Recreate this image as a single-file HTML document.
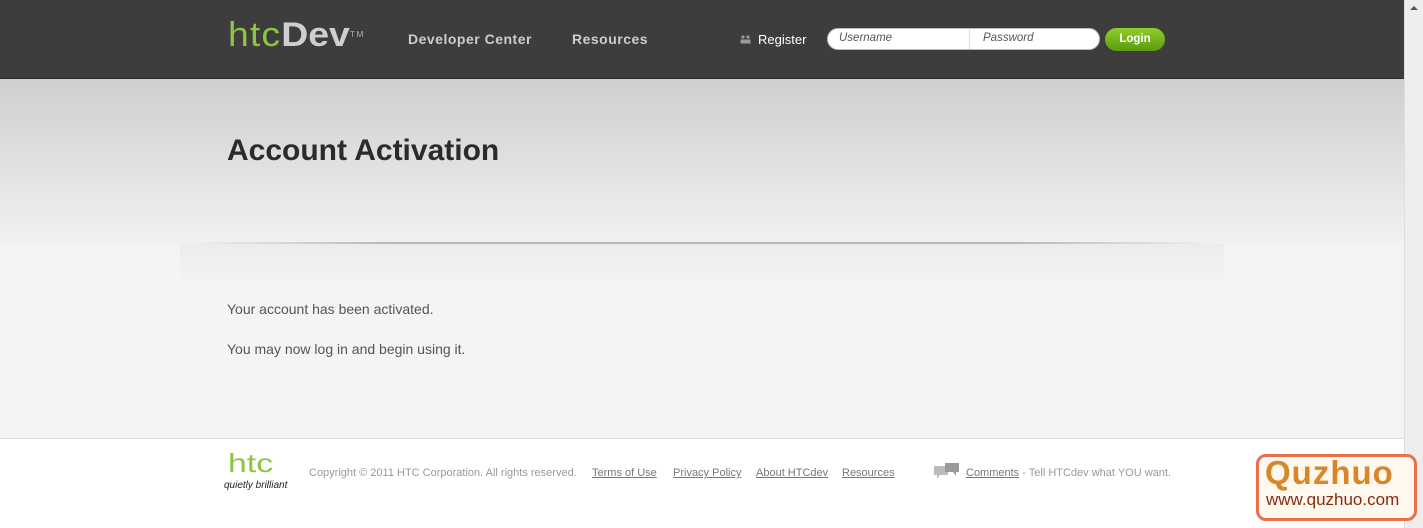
<!DOCTYPE html>
<html><head><style>
*{margin:0;padding:0;box-sizing:border-box}
body{width:1423px;height:528px;overflow:hidden;font-family:"Liberation Sans",Arial,sans-serif;background:#f4f4f4;position:relative}
.main{position:absolute;left:0;top:0;width:1404px;height:528px}
.hdr{position:absolute;left:0;top:0;width:1404px;height:79px;background:#3d3d3d;border-bottom:1px solid #2a2a2a}
.band{position:absolute;left:0;top:79px;width:1404px;height:164px;background:linear-gradient(#cfcfcf,#f1f1f1)}
.line{position:absolute;left:180px;top:242px;width:1044px;height:2px;background:linear-gradient(90deg,rgba(180,180,180,0),#b8b8b8 20%,#b8b8b8 80%,rgba(180,180,180,0))}
.shadow{position:absolute;left:180px;top:244px;width:1044px;height:40px;background:linear-gradient(#ececec,#f4f4f4)}
.foot{position:absolute;left:0;top:438px;width:1404px;height:90px;background:#fff;border-top:1px solid #ddd}
.sb{position:absolute;left:1404px;top:0;width:19px;height:528px;background:#eeeeee;border-left:1px solid #ddd}
.t{position:absolute;white-space:nowrap}
a{color:#777;text-decoration:underline}
</style></head><body>
<div class="main">
<div class="hdr"></div>
<div class="band"></div>
<div class="line"></div>
<div class="shadow"></div>
<div class="t" style="left:228px;top:16px;font-size:34px;letter-spacing:1px;color:#8cc63f;line-height:38px;transform:scaleX(1.1);transform-origin:left">htc<span style="color:#cfcfcf;font-weight:bold;letter-spacing:0">Dev</span><span style="font-size:8px;color:#aaa;vertical-align:top;">TM</span></div>
<div class="t" style="left:408px;top:31px;font-size:14px;font-weight:bold;color:#cdcdcd;letter-spacing:.5px">Developer Center</div>
<div class="t" style="left:572px;top:31px;font-size:14px;font-weight:bold;color:#cdcdcd;letter-spacing:.5px">Resources</div>
<svg class="t" style="left:740px;top:35px" width="12" height="10"><circle cx="3" cy="2" r="1.6" fill="#999"/><circle cx="8" cy="2" r="1.6" fill="#999"/><rect x="0.5" y="4.5" width="5" height="4" fill="#999"/><rect x="5.5" y="4.5" width="5" height="4" fill="#999"/></svg>
<div class="t" style="left:758px;top:32px;font-size:13px;color:#fff">Register</div>
<div style="position:absolute;left:827px;top:28px;width:273px;height:22px;background:#fff;border-radius:11px;border:1px solid #bbb"></div>
<div style="position:absolute;left:969px;top:29px;width:1px;height:20px;background:#ddd"></div>
<div class="t" style="left:839px;top:32px;font-size:11.5px;font-style:italic;color:#555">Username</div>
<div class="t" style="left:983px;top:32px;font-size:11.5px;font-style:italic;color:#555">Password</div>
<div style="position:absolute;left:1105px;top:28px;width:60px;height:23px;border-radius:12px;background:linear-gradient(#8fcf2a,#5a9a10);color:#fff;font-size:11.5px;font-weight:bold;text-align:center;line-height:23px">Login</div>
<div class="t" style="left:227px;top:134px;font-size:30px;font-weight:bold;color:#2b2b2b">Account Activation</div>
<div class="t" style="left:227px;top:301px;font-size:14px;color:#555">Your account has been activated.</div>
<div class="t" style="left:227px;top:341px;font-size:14px;color:#555">You may now log in and begin using it.</div>
<div class="foot"></div>
<div class="t" style="left:228px;top:450px;font-size:26px;color:#8cc63f;line-height:26px;transform:scaleX(1.3);transform-origin:left">htc</div>
<div class="t" style="left:224px;top:480px;font-size:10px;font-style:italic;color:#222">quietly brilliant</div>
<div class="t" style="left:309px;top:467px;font-size:11px;color:#999">Copyright © 2011 HTC Corporation. All rights reserved.</div>
<div class="t" style="left:592px;top:467px;font-size:11px"><a>Terms of Use</a></div>
<div class="t" style="left:673px;top:467px;font-size:11px"><a>Privacy Policy</a></div>
<div class="t" style="left:756px;top:467px;font-size:11px"><a>About HTCdev</a></div>
<div class="t" style="left:842px;top:467px;font-size:11px"><a>Resources</a></div>
<svg class="t" style="left:933px;top:462px" width="28" height="22"><path d="M1 4h14v9H7l-3 4v-4H1z" fill="#bbb"/><path d="M12 1h14v9h-3v4l-3-4h-8z" fill="#999"/></svg>
<div class="t" style="left:966px;top:467px;font-size:11px;color:#999"><a>Comments</a> - Tell HTCdev what YOU want.</div>
</div>
<div class="sb"><div style="position:absolute;left:5px;top:6px;width:0;height:0;border-left:4px solid transparent;border-right:4px solid transparent;border-bottom:4px solid #555"></div></div>
<div style="position:absolute;left:1256px;top:454px;width:161px;height:67px;border:3px solid #e8704a;border-radius:10px;background:#fff8ee"></div>
<div class="t" style="left:1265px;top:455px;font-size:33px;font-weight:bold;color:#d9862a;letter-spacing:1px;line-height:36px">Quzhuo</div>
<div class="t" style="left:1266px;top:490px;font-size:17px;color:#8a2a10">www.quzhuo.com</div>
</body></html>
